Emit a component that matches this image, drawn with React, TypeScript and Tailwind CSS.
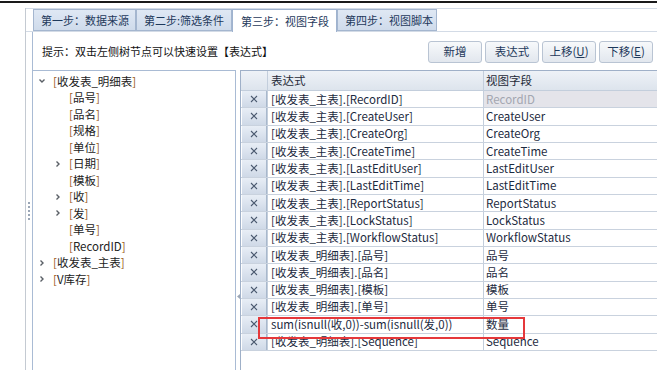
import React from "react";

const tabs = [
  { label: "第一步：数据来源", w: "w-[103px]", active: false },
  { label: "第二步:筛选条件", w: "w-[96px]", active: false },
  { label: "第三步：视图字段", w: "w-[105px]", active: true },
  { label: "第四步：视图脚本", w: "w-[100px]", active: false },
];

type TreeItem = { label: string; level: 0 | 1; chevron?: "open" | "closed" };

const tree: TreeItem[] = [
  { label: "收发表_明细表", level: 0, chevron: "open" },
  { label: "品号", level: 1 },
  { label: "品名", level: 1 },
  { label: "规格", level: 1 },
  { label: "单位", level: 1 },
  { label: "日期", level: 1, chevron: "closed" },
  { label: "模板", level: 1 },
  { label: "收", level: 1, chevron: "closed" },
  { label: "发", level: 1, chevron: "closed" },
  { label: "单号", level: 1 },
  { label: "RecordID", level: 1 },
  { label: "收发表_主表", level: 0, chevron: "closed" },
  { label: "V库存", level: 0, chevron: "closed" },
];

const rows = [
  ["[收发表_主表].[RecordID]", "RecordID"],
  ["[收发表_主表].[CreateUser]", "CreateUser"],
  ["[收发表_主表].[CreateOrg]", "CreateOrg"],
  ["[收发表_主表].[CreateTime]", "CreateTime"],
  ["[收发表_主表].[LastEditUser]", "LastEditUser"],
  ["[收发表_主表].[LastEditTime]", "LastEditTime"],
  ["[收发表_主表].[ReportStatus]", "ReportStatus"],
  ["[收发表_主表].[LockStatus]", "LockStatus"],
  ["[收发表_主表].[WorkflowStatus]", "WorkflowStatus"],
  ["[收发表_明细表].[品号]", "品号"],
  ["[收发表_明细表].[品名]", "品名"],
  ["[收发表_明细表].[模板]", "模板"],
  ["[收发表_明细表].[单号]", "单号"],
  ["sum(isnull(收,0))-sum(isnull(发,0))", "数量"],
  ["[收发表_明细表].[Sequence]", "Sequence"],
];

function Chevron({ open }: { open: boolean }) {
  return (
    <svg width="8" height="8" viewBox="0 0 8 8" className="shrink-0">
      {open ? (
        <path d="M1.5 2.5 L4 5 L6.5 2.5" fill="none" stroke="#5a5f66" strokeWidth="1.4" />
      ) : (
        <path d="M2.5 1.5 L5 4 L2.5 6.5" fill="none" stroke="#5a5f66" strokeWidth="1.4" />
      )}
    </svg>
  );
}

function Cross() {
  return (
    <svg width="8" height="8" viewBox="0 0 8 8">
      <path d="M1 1 L7 7 M7 1 L1 7" stroke="#4b5a70" strokeWidth="1.1" />
    </svg>
  );
}

function Btn({ children }: { children: React.ReactNode }) {
  return (
    <div className="w-[54px] h-[22px] flex items-center justify-center rounded-[3px] border border-[#b9c4d3] bg-gradient-to-b from-[#f7f9fb] to-[#e2e7ee] text-[11.5px] text-[#1e395b]">
      {children}
    </div>
  );
}

export default function App() {
  return (
    <div
      className="w-[657px] h-[370px] bg-white overflow-hidden relative"
      style={{ fontFamily: '"Noto Sans CJK SC", "Noto Sans", sans-serif' }}
    >
      <div className="h-px" />
      <div className="h-[2px] bg-[#1a1a1a]" />
      <div className="flex h-[367px] pt-[5px]">
        <div className="w-[25px] shrink-0" />
        <div className="flex-1 flex flex-col border-l border-[#c4cad2]">
          {/* tab strip */}
          <div className="h-[24px] shrink-0 border-t border-[#d3dbe6] border-b border-[#9fb3cf] flex items-end pl-[7px]">
            {tabs.map((t) => (
              <div
                key={t.label}
                className={
                  t.active
                    ? `${t.w} h-[23px] -mb-px bg-white border border-b-0 border-[#9fb3cf] flex items-center pl-[8px] text-[11px] text-[#1e395b] whitespace-nowrap`
                    : `${t.w} h-[22px] bg-gradient-to-b from-[#dfe8f4] to-[#cfdbeb] border border-[#a4b6cf] flex items-center pl-[7px] text-[11px] text-[#1e395b] whitespace-nowrap`
                }
              >
                {t.label}
              </div>
            ))}
          </div>

          <div className="flex-1 flex">
            {/* grip */}
            <div className="w-[6px] shrink-0 flex justify-center pt-[170px]">
              <div className="flex flex-col gap-[2px]">
                {[0, 1, 2, 3, 4].map((i) => (
                  <div key={i} className="w-[2px] h-[2px] bg-[#9aa6b6]" />
                ))}
              </div>
            </div>

            <div className="flex-1 flex flex-col border-l border-[#a9bbd4]">
              {/* hint + buttons */}
              <div className="h-[38px] shrink-0 flex items-center justify-between pl-[9px] pr-[4px]">
                <span className="text-[11px] text-[#111]">
                  提示：双击左侧树节点可以快速设置【表达式】
                </span>
                <div className="flex gap-[3px] mt-[2px]">
                  <Btn>新增</Btn>
                  <Btn>表达式</Btn>
                  <Btn>
                    上移(<span className="underline">U</span>)
                  </Btn>
                  <Btn>
                    下移(<span className="underline">E</span>)
                  </Btn>
                </div>
              </div>

              <div className="flex-1 flex">
                {/* tree */}
                <div className="w-[203px] shrink-0 border-t border-r border-[#a9bbd4] pt-[2px]">
                  {tree.map((it, i) => (
                    <div
                      key={i}
                      className={`h-[16.5px] flex items-center text-[11.5px] ${it.level === 0 ? "pl-[5px]" : "pl-[21px]"}`}
                    >
                      <div className="w-[15px] flex items-center">
                        {it.chevron ? <Chevron open={it.chevron === "open"} /> : null}
                      </div>
                      <span className="text-[#9a5a22]">[</span>
                      <span className="text-[#222]">{it.label}</span>
                      <span className="text-[#9a5a22]">]</span>
                    </div>
                  ))}
                </div>

                {/* splitter */}
                <div className="w-[4px] shrink-0 flex justify-center pt-[224px]">
                  <svg width="3" height="5" viewBox="0 0 3 5">
                    <path d="M3 0 L0 2.5 L3 5 Z" fill="#9aa6b6" />
                  </svg>
                </div>

                {/* grid */}
                <div className="flex-1 border-l border-t border-[#9fb0c8] relative">
                  <div className="h-[20px] flex border-b border-[#c3cedc] bg-gradient-to-b from-[#eef2f7] to-[#dde4ed] text-[11.5px] text-[#1f2a38]">
                    <div className="w-[27px] border-r border-[#c3cedc]" />
                    <div className="w-[216px] border-r border-[#c3cedc] pl-[3px] flex items-center">表达式</div>
                    <div className="flex-1 pl-[2px] flex items-center">视图字段</div>
                  </div>
                  {rows.map(([expr, field], i) => (
                    <div
                      key={i}
                      className="h-[17.33px] flex border-b border-[#c9d2de] text-[11.5px] text-[#1c2a40]"
                    >
                      <div className="w-[27px] border-r border-[#c3cedc] pl-[1px]">
                        <div className="h-full flex items-center justify-center bg-gradient-to-b from-[#e8eef6] to-[#cfd9e7] border-r border-[#a8b8cc]">
                          <Cross />
                        </div>
                      </div>
                      <div className="w-[216px] border-r border-[#c3cedc] pl-[3px] flex items-center whitespace-nowrap overflow-hidden">
                        {expr}
                      </div>
                      <div
                        className={`flex-1 pl-[2px] flex items-center whitespace-nowrap ${i === 0 ? "bg-[#e4e4ea] text-[#a3a6b0]" : ""}`}
                      >
                        {field}
                      </div>
                    </div>
                  ))}
                  {/* annotation box */}
                  <div className="absolute left-[17px] top-[246px] w-[267px] h-[22px] border-2 border-[#e5383b] pointer-events-none" />
                </div>
              </div>
            </div>
          </div>
        </div>
      </div>
    </div>
  );
}
